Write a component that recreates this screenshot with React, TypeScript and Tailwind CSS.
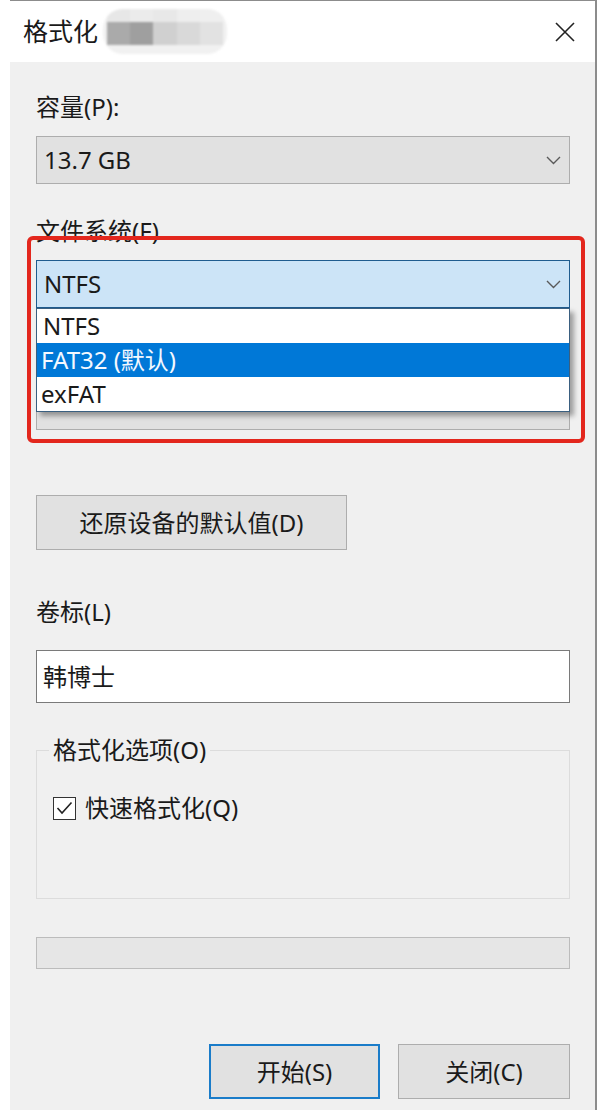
import clsx from 'clsx';

function Chevron() {
  return (
    <svg width="15" height="9" viewBox="0 0 15 9" fill="none">
      <polyline points="1,1 7.5,7.5 14,1" stroke="#5a5a5a" strokeWidth="1.4" />
    </svg>
  );
}

function Select({ value, focused = false }: { value: string; focused?: boolean }) {
  return (
    <div
      className={clsx(
        'flex h-[48px] items-center justify-between border pl-[7px] pr-[8px]',
        focused ? 'border-[#1f5c8f] bg-[#cce4f7]' : 'border-[#adadad] bg-[#e1e1e1]'
      )}
    >
      <span>{value}</span>
      <Chevron />
    </div>
  );
}

function Label({ children, className }: { children?: React.ReactNode; className?: string }) {
  return <div className={clsx('h-[30px] leading-[30px]', className)}>{children}</div>;
}

function Mosaic() {
  const top = ['#e7e7e7', '#ebebeb', '#e8e8e8', '#eeeeee', '#efefef'];
  const mid = ['#aaaaaa', '#9f9f9f', '#d0d0d0', '#d9d9d9', '#e2e2e2'];
  return (
    <div className="ml-[5px] flex h-[45px] w-[124px] flex-col overflow-hidden rounded-[20px] bg-[#f1f1f1] px-[4px] blur-[1px]">
      <div className="flex h-[13px]">
        {top.map((c, i) => (
          <div key={i} className="h-full flex-1" style={{ backgroundColor: c }} />
        ))}
      </div>
      <div className="flex h-[23px]">
        {mid.map((c, i) => (
          <div key={i} className="h-full flex-1" style={{ backgroundColor: c }} />
        ))}
      </div>
    </div>
  );
}

export default function App() {
  return (
    <div className="h-[1110px] w-[606px] overflow-hidden bg-white font-['Noto_Sans','Noto_Sans_CJK_SC',sans-serif] text-[24px] text-[#1a1a1a]">
      <div className="ml-[10px] flex h-full w-[587px] flex-col border-t border-r-2 border-[#8c8c8c]">
        {/* Title bar */}
        <div className="flex h-[61px] shrink-0 items-center bg-white pl-[13px] pr-[20px]">
          <span className="text-[25px] leading-none">格式化</span>
          <Mosaic />
          <svg className="ml-auto" width="20" height="20" viewBox="0 0 20 20">
            <path d="M1 1 L19 19 M19 1 L1 19" stroke="#222" strokeWidth="1.6" />
          </svg>
        </div>

        {/* Body */}
        <div className="relative flex flex-1 flex-col bg-[#f0f0f0] pl-[26px] pr-[25px] pt-[30px]">
          <Label>容量(P):</Label>
          <div className="mt-[14px]">
            <Select value="13.7 GB" />
          </div>

          <Label className="mt-[32px]">文件系统(F)</Label>
          <div className="relative mt-[14px]">
            <Select value="NTFS" focused />
            <div className="absolute left-0 right-0 top-full z-10 border border-[#3a5f80] bg-white shadow-[4px_4px_5px_rgba(0,0,0,0.35)]">
              <div className="h-[34px] pl-[6px] leading-[34px]">NTFS</div>
              <div className="h-[34px] bg-[#0078d7] pl-[4px] leading-[34px] text-[#f4f8ff]">FAT32 (默认)</div>
              <div className="h-[34px] pl-[4px] leading-[34px]">exFAT</div>
            </div>
          </div>

          {/* allocation size row, hidden under the open list */}
          <Label className="mt-[32px]" />
          <div className="mt-[12px]">
            <Select value="" />
          </div>

          <button className="mt-[65px] h-[55px] w-[311px] border border-[#adadad] bg-[#e1e1e1]">
            还原设备的默认值(D)
          </button>

          <Label className="mt-[47px]">卷标(L)</Label>
          <div className="mt-[23px] flex h-[53px] items-center border border-[#7a7a7a] bg-white pl-[6px]">
            韩博士
          </div>

          <fieldset className="mt-[32px] h-[164px] border border-[#dcdcdc] px-[16px]">
            <legend className="ml-[-4px] h-[30px] px-[4px] leading-[30px]">格式化选项(O)</legend>
            <label className="mt-[28px] flex h-[30px] items-center gap-[9px]">
              <span className="flex h-[23px] w-[23px] items-center justify-center border border-[#333] bg-white">
                <svg width="17" height="14" viewBox="0 0 17 14" fill="none">
                  <polyline points="1.5,7 6,12 15.5,1.5" stroke="#222" strokeWidth="1.6" />
                </svg>
              </span>
              <span>快速格式化(Q)</span>
            </label>
          </fieldset>

          <div className="mt-[38px] h-[32px] border border-[#bcbcbc] bg-[#e6e6e6]" />

          <div className="mt-[75px] flex justify-end gap-[18px]">
            <button className="h-[55px] w-[171px] border-2 border-[#1a7cc9] bg-[#e1e1e1]">开始(S)</button>
            <button className="h-[55px] w-[172px] border border-[#adadad] bg-[#e1e1e1]">关闭(C)</button>
          </div>

          {/* red annotation frame */}
          <div className="pointer-events-none absolute left-[17px] top-[174px] z-20 h-[207px] w-[558px] rounded-[6px] border-[4px] border-[#e3271d]" />
        </div>
      </div>
    </div>
  );
}
